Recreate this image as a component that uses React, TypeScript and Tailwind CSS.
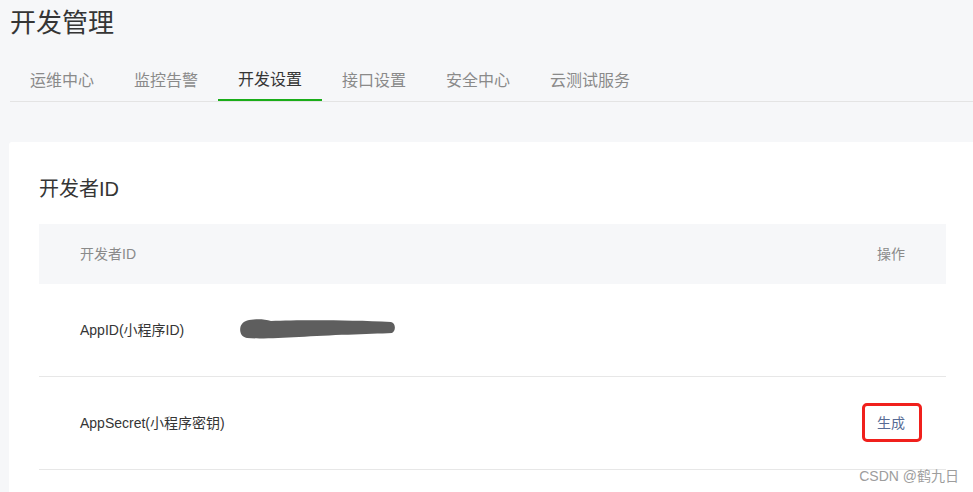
import React from "react";

const font = { fontFamily: '"Liberation Sans", "Noto Sans CJK SC", sans-serif' };

const tabs = ["运维中心", "监控告警", "开发设置", "接口设置", "安全中心", "云测试服务"];

export default function App() {
  return (
    <div
      className="relative w-[973px] h-[492px] overflow-hidden bg-[#f6f7f9] text-[#353535]"
      style={font}
    >
      <div className="pl-[10px] pt-[10px] text-[26px] leading-[26px] text-[#353535]">开发管理</div>

      <div className="ml-[10px] mt-[24px] flex border-b border-[#e4e4e4]">
        {tabs.map((t, i) => (
          <div
            key={t}
            className={
              i === 2
                ? "h-[41px] px-5 flex items-center text-[16px] text-[#353535] border-b-2 border-[#1aad19] mb-[-1px]"
                : "h-[41px] px-5 flex items-center text-[16px] text-[#8a8a8a]"
            }
          >
            {t}
          </div>
        ))}
      </div>

      <div className="ml-[9px] mt-[40px] w-[967px] h-[400px] bg-white rounded-[3px] px-[30px] pt-[33px]">
        <div className="text-[20px] leading-[28px] text-[#353535]">开发者ID</div>

        <div className="mt-[21px]">
          <div className="h-[60px] bg-[#f6f7f9] flex items-center justify-between px-[41px] text-[14px] text-[#8a8a8a]">
            <span>开发者ID</span>
            <span>操作</span>
          </div>

          <div className="h-[93px] border-b border-[#e7e7e7] flex items-center px-[41px] text-[14px] text-[#353535]">
            <span className="w-[159px]">AppID(小程序ID)</span>
            <svg width="157" height="22" viewBox="0 0 157 22" className="mt-[-3px]">
              <path
                d="M3 6 C 6 1, 22 0, 32 3 C 60 2, 110 2, 152 4 C 157 5, 157 13, 153 15 C 130 16, 90 17, 60 19 C 40 20, 20 21, 8 20 C 0 19, 0 9, 3 6 Z"
                fill="#5e5e5e"
              />
            </svg>
          </div>

          <div className="h-[93px] border-b border-[#e7e7e7] flex items-center justify-between px-[41px] text-[14px] text-[#353535]">
            <span>AppSecret(小程序密钥)</span>
            <span className="relative leading-[20px] text-[#576b95]">
              生成
              <span className="absolute left-[-15px] right-[-17px] top-[-10px] bottom-[-9px] border-[3px] border-[#f0201c] rounded-[5px]" />
            </span>
          </div>
        </div>
      </div>

      <div className="absolute right-[14px] bottom-[8px] text-[14px] leading-[16px] text-[#9d9d9d]">
        CSDN @鹤九日
      </div>
    </div>
  );
}
